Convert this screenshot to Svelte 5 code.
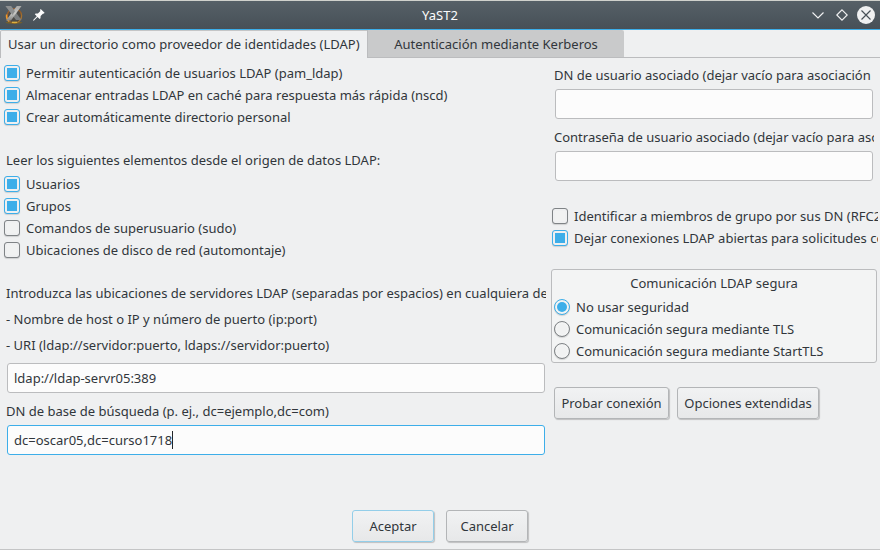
<script>
  let auth = $state([
    { label: 'Permitir autenticación de usuarios LDAP (pam_ldap)', on: true },
    { label: 'Almacenar entradas LDAP en caché para respuesta más rápida (nscd)', on: true },
    { label: 'Crear automáticamente directorio personal', on: true }
  ]);
  let sources = $state([
    { label: 'Usuarios', on: true },
    { label: 'Grupos', on: true },
    { label: 'Comandos de superusuario (sudo)', on: false },
    { label: 'Ubicaciones de disco de red (automontaje)', on: false }
  ]);
  let connection = $state([
    { label: 'Identificar a miembros de grupo por sus DN (RFC2', on: false },
    { label: 'Dejar conexiones LDAP abiertas para solicitudes co', on: true }
  ]);
  const modes = [
    'No usar seguridad',
    'Comunicación segura mediante TLS',
    'Comunicación segura mediante StartTLS'
  ];
  let mode = $state(0);
</script>

{#snippet checks(items)}
  {#each items as item}
    <div class="row" role="checkbox" aria-checked={item.on} tabindex="-1"
      onclick={() => (item.on = !item.on)} onkeydown={() => {}}>
      <span class="box" class:on={item.on}></span><span class="text">{item.label}</span>
    </div>
  {/each}
{/snippet}

<div class="window">
  <header>
    <div class="left-icons">
      <svg width="20" height="20" viewBox="0 0 20 20">
        <defs>
          <linearGradient id="ring" x1="0" y1="0" x2="1" y2="1">
            <stop offset="0" stop-color="#a8652f" /><stop offset=".5" stop-color="#8a5526" /><stop offset="1" stop-color="#c08a35" />
          </linearGradient>
          <linearGradient id="metal" x1="0" y1="0" x2="0" y2="1">
            <stop offset="0" stop-color="#a9a9a7" /><stop offset=".5" stop-color="#c9c9c6" /><stop offset="1" stop-color="#858583" />
          </linearGradient>
        </defs>
        <ellipse cx="10" cy="17.6" rx="8.5" ry="1.3" fill="#75602c" />
        <circle cx="10.4" cy="10.8" r="7.2" fill="#4d4b47" stroke="url(#ring)" stroke-width="1.3" />
        <path d="M2.6 9.5c-.4 3 .8 5.500 2.700 7" fill="none" stroke="#ee9a2c" stroke-width="1.500" />
        <path d="M8 17.300h5" stroke="#e0b540" stroke-width="1.300" />
        <path d="M1.500 1H7l10.500 14h-5.500z" fill="#7c7f80" />
        <path d="M12.800 1h4.700L7 15.500H2z" fill="url(#metal)" />
        <path d="M1.500 1H7l4 5.300-2.500 3.700z" fill="#8e9090" />
      </svg>
      <svg class="pin" width="12" height="12" viewBox="0 0 12 12">
        <path d="M7.7 0 11.6 3.8 10.8 4.7 10.1 4.5 7.6 7 7.5 9.3 6.6 10.1 4.5 8 1 11.5 0 11.8 .4 10.8 3.8 7.3 1.8 5.2 2.6 4.4 4.9 4.4 7.4 1.9 7 1z" fill="#fcfcfc" />
      </svg>
    </div>
    <div class="title">YaST2</div>
    <svg class="controls" width="68" height="20" viewBox="0 0 68 20" fill="none" stroke="#eff0f1" stroke-width="1.15">
      <path d="M4.5 7.5 10 13l5.5-5.5M34 4.8 39.2 10 34 15.2 28.8 10z" />
      <circle cx="58" cy="10" r="9" fill="#eff0f1" stroke="none" />
      <path d="m53.5 5.5 9 9m0-9-9 9" stroke="#475057" />
    </svg>
  </header>

  <nav>
    <div class="tab active">Usar un directorio como proveedor de identidades (LDAP)</div>
    <div class="tab other">Autenticación mediante Kerberos</div>
    <div class="rest"></div>
  </nav>

  <main>
    <section class="left">
      {@render checks(auth)}
      <div class="label spaced">Leer los siguientes elementos desde el origen de datos LDAP:</div>
      {@render checks(sources)}
      <div class="label spaced">Introduzca las ubicaciones de servidores LDAP (separadas por espacios) en cualquiera de</div>
      <div class="label">- Nombre de host o IP y número de puerto (ip:port)</div>
      <div class="label">- URI (ldap://servidor:puerto, ldaps://servidor:puerto)</div>
      <div class="field server">ldap://ldap-servr05:389</div>
      <div class="label base">DN de base de búsqueda (p. ej., dc=ejemplo,dc=com)</div>
      <div class="field focus">dc=oscar05,dc=curso1718<i class="caret"></i></div>
    </section>

    <section class="right">
      <div class="form">
        <div class="label">DN de usuario asociado (dejar vacío para asociación</div>
        <div class="field"></div>
        <div class="label second">Contraseña de usuario asociado (dejar vacío para aso</div>
        <div class="field"></div>
      </div>
      <div class="options">{@render checks(connection)}</div>
      <div class="group">
        <div class="group-title">Comunicación LDAP segura</div>
        {#each modes as name, i}
          <div class="row" role="radio" aria-checked={mode === i} tabindex="-1"
            onclick={() => (mode = i)} onkeydown={() => {}}>
            <span class="radio" class:on={mode === i}></span><span class="text">{name}</span>
          </div>
        {/each}
      </div>
      <div class="actions">
        <button class="test">Probar conexión</button>
        <button class="extended">Opciones extendidas</button>
      </div>
    </section>
  </main>

  <footer>
    <button class="default">Aceptar</button>
    <button>Cancelar</button>
  </footer>
</div>

<style>
  .window {
    width: 880px; height: 550px; box-sizing: border-box; overflow: hidden;
    display: flex; flex-direction: column;
    background: #eff0f1; color: #31363b;
    font: 13px/22px "Noto Sans", sans-serif;
    border-bottom: 1px solid #c4c5c6;
  }
  header {
    flex: none; height: 30px; box-sizing: border-box;
    display: grid; grid-template-columns: 1fr auto 1fr; align-items: center;
    border-top: 1px solid #d0d1cc; border-bottom: 1px solid #3daee9;
    background: linear-gradient(#566067, #475057); color: #fcfcfc;
  }
  .left-icons { display: flex; align-items: center; padding-left: 4px; }
  .pin { margin-left: 9px; }
  .controls { justify-self: end; margin-right: 4px; }
  nav { flex: none; height: 28px; display: flex; white-space: nowrap; }
  .tab { box-sizing: border-box; height: 28px; line-height: 27px; }
  .active {
    width: 367px; padding-left: 7px; border-left: 1px solid #bbbcbe;
    border-top: 1px solid #c4c5c6; border-radius: 2px 0 0 0;
  }
  .other {
    width: 257px; text-align: center; background: #c9cacb;
    border-left: 1px solid #bbbcbe; border-bottom: 1px solid #bbbcbe; border-radius: 0 2px 0 0;
    line-height: 28px;
  }
  .rest { flex: 1; border-bottom: 1px solid #bbbcbe; }
  main { flex: 1; display: flex; min-height: 0; padding-top: 4px; }
  .left { width: 546px; overflow: hidden; }
  .right { width: 329px; padding-left: 5px; }
  .row { height: 22px; display: flex; align-items: center; white-space: nowrap; overflow: hidden; padding-left: 4px; outline: 0; }
  .text { margin-left: 6px; }
  .box, .radio {
    flex: none; width: 16px; height: 16px; box-sizing: border-box;
    border: 1px solid #7f8386; border-radius: 3px; padding: 2px;
    background: #f1f2f2; background-clip: content-box;
    box-shadow: 0 1px 1px #0002;
  }
  .box.on { border-color: #3daee9; background-color: #3daee9; }
  .radio { border-radius: 50%; }
  .radio.on { border-color: #3daee9; background-color: #3daee9; }
  .label { height: 26px; line-height: 26px; padding-left: 6px; white-space: nowrap; overflow: hidden; }
  .spaced { margin-top: 19px; }
  .field {
    height: 30px; box-sizing: border-box; border: 1px solid #bbbcbe; border-radius: 3px;
    background: #fcfcfc; margin: 1px 1px 0 7px; padding-left: 6px; line-height: 28px;
    display: flex; align-items: center;
  }
  .server { margin-top: 5px; }
  .base { margin-top: 5px; }
  .focus { border-color: #3daee9; }
  .caret { width: 1px; height: 18px; background: #232629; }
  .form { width: 323px; }
  .form .label { padding-left: 3px; }
  .form .field { margin: 1px 1px 0 4px; }
  .form .second { margin-top: 5px; }
  .options { margin-top: 24px; width: 327px; }
  .options .row { padding-left: 1px; }
  .group {
    width: 326px; height: 94px; box-sizing: border-box; margin-top: 20px;
    border: 1px solid #bbbcbe; border-radius: 3px; background: #f3f4f4;
  }
  .group-title { text-align: center; height: 26px; line-height: 27px; }
  .group .row { padding-left: 2px; }
  .actions { display: flex; gap: 8px; margin: 24px 0 0 3px; }
  button {
    width: 82px; height: 32px; box-sizing: border-box; padding: 0;
    border: 1px solid #b3b5b7; border-radius: 3px; background: linear-gradient(#f1f2f3, #e7e8e9);
    color: #31363b; font: 13px/30px "Noto Sans", sans-serif; white-space: nowrap;
    box-shadow: 1px 1px 1px #0003;
  }
  .test { width: 115px; }
  .extended { width: 142px; }
  .default { border-color: #93cee9; }
  footer { flex: none; display: flex; justify-content: center; gap: 12px; padding-bottom: 7px; }
</style>
